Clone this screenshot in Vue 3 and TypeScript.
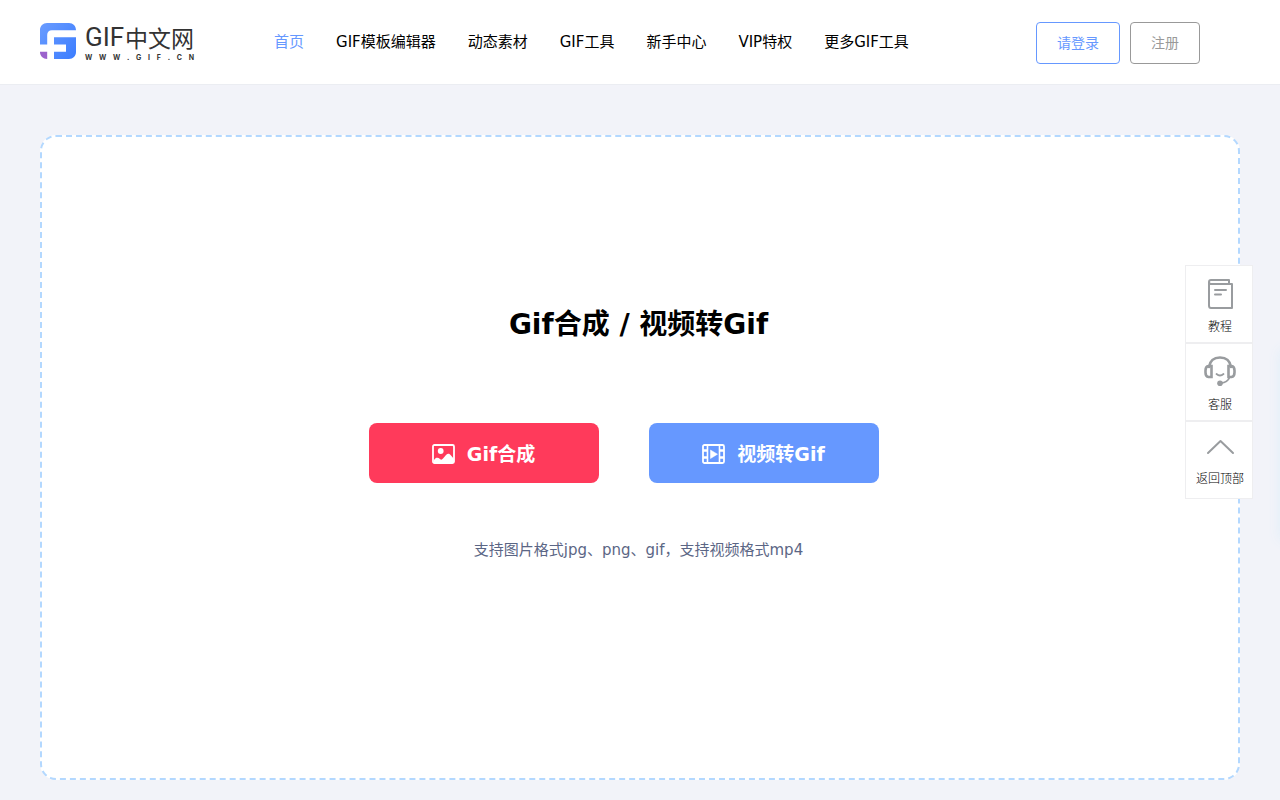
<script setup lang="ts">
const navItems: string[] = ['首页', 'GIF模板编辑器', '动态素材', 'GIF工具', '新手中心', 'VIP特权', '更多GIF工具']
const domain: string[] = 'WWW.GIF.CN'.split('')
const toTop = (): void => window.scrollTo({ top: 0, behavior: 'smooth' })
</script>

<template>
  <div class="page">
    <header class="header">
      <div class="bar">
        <a class="logo" href="#" aria-label="GIF中文网">
          <svg class="mark" viewBox="0 0 36 36" width="36" height="36" aria-hidden="true">
            <defs>
              <linearGradient id="blue" gradientUnits="userSpaceOnUse" x1="0" y1="0" x2="36" y2="30">
                <stop offset="0" stop-color="#6a9cff" />
                <stop offset="1" stop-color="#3f7fff" />
              </linearGradient>
            </defs>
            <path d="M7 0H29C33 0 36 3 36 7.200H12C9 7.200 7.200 9 7.200 12V21.500H0V7C0 3 3 0 7 0Z" fill="url(#blue)" />
            <path d="M14 14.300H36V29C36 33 33 36 29 36H14V28.700H26V21.500H14Z" fill="url(#blue)" />
            <path d="M0 28.700H7.200V36C3 36 0 33 0 29Z" fill="#9b62cc" />
          </svg>
          <span class="words">
            <span class="name"><span class="latin">GIF</span><span>中文网</span></span>
            <span class="domain"><span v-for="(c, i) in domain" :key="i">{{ c }}</span></span>
          </span>
        </a>
        <nav class="nav">
          <a v-for="(item, i) in navItems" :key="item" href="#" :class="{ active: i === 0 }">{{ item }}</a>
        </nav>
        <div class="account">
          <button type="button" class="login">请登录</button>
          <button type="button" class="register">注册</button>
        </div>
      </div>
    </header>

    <main class="panel">
      <h1>Gif合成 / 视频转Gif</h1>
      <div class="actions">
        <button type="button" class="red">
          <svg viewBox="0 0 24 20" width="24" height="20" aria-hidden="true">
            <rect x="1" y="1" width="21" height="18" rx="1.500" fill="none" stroke="#fff" stroke-width="1.800" />
            <circle cx="8.700" cy="7" r="2.900" fill="#fff" />
            <path d="M2 16C4 13 6 13.500 8 15C9 16 10 15.800 11 14.500L14 11C16 9 17.500 9.500 19 11.500L22 15V19H2Z" fill="#fff" />
          </svg>
          <span>Gif合成</span>
        </button>
        <button type="button" class="blue">
          <svg viewBox="0 0 24 20" width="24" height="20" fill="none" stroke="#fff" stroke-width="1.800" aria-hidden="true">
            <rect x="1" y="1" width="21" height="18" rx="1.500" />
            <path d="M5.500 1V19M17.500 1V19" stroke-width="1.600" />
            <path d="M1 6.500H5.500M1 13.500H5.500M17.500 6.500H22M17.500 13.500H22" stroke-width="2.400" />
            <path d="M8.500 6V14.500L15.500 10.200Z" fill="#fff" stroke-width=".5" />
          </svg>
          <span>视频转Gif</span>
        </button>
      </div>
      <p>支持图片格式jpg、png、gif，支持视频格式mp4</p>
    </main>

    <aside class="tools">
      <a href="#">
        <svg viewBox="0 0 34 34" width="34" height="34" fill="none" stroke="#999c9f" stroke-width="2" stroke-linecap="round" stroke-linejoin="round" aria-hidden="true">
          <path d="M6 6V29.500Q6 32 8 32H29V8H8Q6 8 6 6Q6 4 8 4H26V8" />
          <path d="M12 14H23M12 18.500H18" />
        </svg>
        <span>教程</span>
      </a>
      <a href="#">
        <svg viewBox="0 0 34 34" width="34" height="34" fill="none" stroke="#999c9f" stroke-width="2.600" stroke-linecap="round" aria-hidden="true">
          <path d="M6 13C7 6.500 11 3.500 17 3.500S27 6.500 28 13" />
          <path d="M8.500 12H5.500Q2.500 12.500 2.500 16.500V18.500Q2.500 22.500 5.500 23H8.500Z" />
          <path d="M25.500 12H28.500Q31.500 12.500 31.500 16.500V18.500Q31.500 22.500 28.500 23H25.500Z" />
          <path d="M13.500 20Q17 23 20.500 20" stroke-width="1.800" />
          <path d="M26.500 23.500Q24.500 28.500 18 29" stroke-width="1.800" />
          <circle cx="17" cy="29.300" r="2.800" fill="#999c9f" stroke="none" />
        </svg>
        <span>客服</span>
      </a>
      <button type="button" @click="toTop">
        <svg viewBox="0 0 34 34" width="34" height="34" fill="none" stroke="#999c9f" stroke-width="2" stroke-linecap="round" stroke-linejoin="round" aria-hidden="true">
          <path d="M5 21L17.500 9L30 21" />
        </svg>
        <span>返回顶部</span>
      </button>
    </aside>
    <div class="drawer" aria-hidden="true"></div>
  </div>
</template>

<style>
body {
  margin: 0;
  background: #f2f3f9;
}
</style>

<style scoped>
.page {
  min-height: 100vh;
  box-sizing: border-box;
  padding-bottom: 20px;
  font-family: "DejaVu Sans", "Noto Sans CJK SC", sans-serif;
  color: #000;
}
a {
  color: inherit;
  text-decoration: none;
}
button {
  font-family: inherit;
  cursor: pointer;
}
.header {
  background: #fff;
  border-bottom: 1px solid #ebedf2;
}
.bar {
  max-width: 1200px;
  height: 84px;
  margin: 0 auto;
  display: flex;
  align-items: center;
}
.logo {
  display: flex;
  align-items: center;
  gap: 9px;
  width: 154px;
  padding-bottom: 2px;
}
.mark {
  flex: none;
}
.words {
  flex: 1;
  color: #333;
}
.name {
  display: flex;
  align-items: center;
  justify-content: space-between;
  font: 400 23px/34px "Noto Sans CJK SC", sans-serif;
  white-space: nowrap;
}
.latin {
  font-family: Roboto, sans-serif;
  font-size: 26px;
}
.domain {
  display: flex;
  justify-content: space-between;
  font: bold 7px/8px Inter, sans-serif;
}
.nav {
  display: flex;
  gap: 32px;
  margin-left: 80px;
  font-size: 15px;
  line-height: 22px;
  white-space: nowrap;
}
.active {
  color: #6698ff;
}
.account {
  display: flex;
  gap: 10px;
  margin-left: auto;
  padding: 2px 40px 0 0;
}
.account button {
  height: 42px;
  padding: 0 20px 2px;
  border: 1px solid;
  border-radius: 4px;
  background: #fff;
  font-size: 14px;
}
.account .login {
  color: #6698ff;
}
.account .register {
  color: #999;
}
.panel {
  box-sizing: border-box;
  max-width: 1200px;
  min-height: 645px;
  margin: 50px auto 0;
  padding: 165px 3px 0 0;
  border: 2px dashed #b3d8ff;
  border-radius: 16px;
  background: #fff;
  text-align: center;
}
h1 {
  margin: 0;
  font-size: 28px;
  line-height: 46px;
}
.actions {
  display: flex;
  justify-content: center;
  gap: 50px;
  margin-top: 75px;
  padding-right: 29px;
}
.actions button {
  display: flex;
  align-items: center;
  justify-content: center;
  gap: 11px;
  width: 230px;
  height: 60px;
  padding: 0 1px 0 0;
  border: 0;
  border-radius: 8px;
  color: #fff;
  font-size: 19px;
  font-weight: bold;
}
.actions svg {
  margin-top: 2px;
}
.actions span {
  padding-bottom: 2px;
}
.red {
  background: #ff3a5b;
}
.blue {
  background: #6698ff;
}
p {
  margin: 56px 0 0;
  color: #5b6685;
  font-size: 15px;
  line-height: 22px;
}
.tools {
  position: fixed;
  right: 27px;
  top: 265px;
  width: 68px;
}
.tools a,
.tools button {
  box-sizing: border-box;
  display: flex;
  flex-direction: column;
  align-items: center;
  width: 100%;
  height: 78px;
  padding: 10px 0 0 2px;
  gap: 6px;
  border: 1px solid #eeeef0;
  background: #fff;
  color: #000;
  font: 300 12px/20px "Noto Sans CJK SC", sans-serif;
}
.tools button {
  gap: 2px;
}
.drawer {
  position: fixed;
  left: 100%;
  top: 350px;
  width: 60px;
  height: 190px;
  box-shadow: 0 0 12px #e0eef8;
}
</style>
